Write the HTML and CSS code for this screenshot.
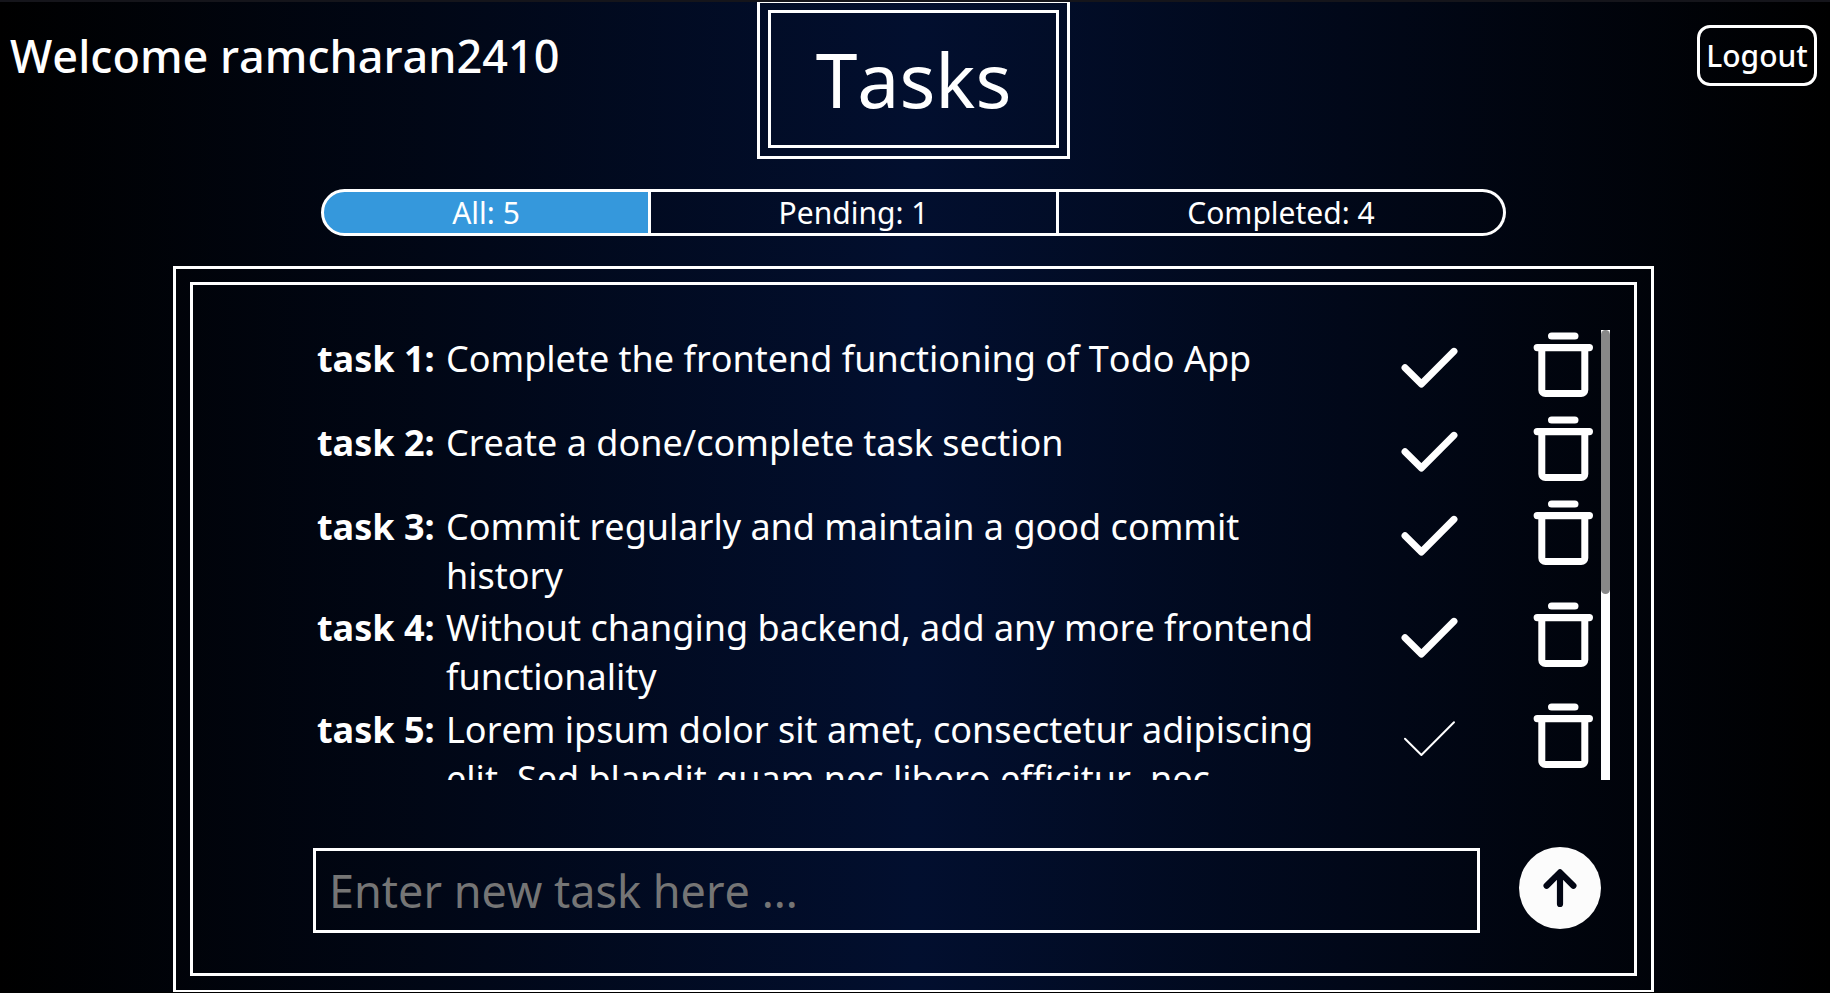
FILE: index.html
```html
<!DOCTYPE html>
<html lang="en">
<head>
<meta charset="utf-8">
<title>Tasks</title>
<link rel="stylesheet" href="styles.css">
</head>
<body>
<svg class="sprite" aria-hidden="true">
  <symbol id="check" viewBox="0 0 66 84"><path d="M10 37.7L26.4 54L59 21.3"/></symbol>
  <symbol id="trash" viewBox="0 0 66 84"><path d="M18.6 6h23.3M4.2 17.6h52.2" stroke-width="7.2"/><path d="M8.8 18v42a3.6 3.6 0 0 0 3.6 3.6h35.8a3.6 3.6 0 0 0 3.6-3.6V18" stroke-width="7"/></symbol>
</svg>
<div class="page">
  <header class="header">
    <div class="welcome">Welcome ramcharan2410</div>
    <h1 class="title"><span class="title-inner">Tasks</span></h1>
    <button class="logout">Logout</button>
  </header>
  <nav class="filters">
    <div class="filter filter-all">All: 5</div>
    <div class="filter filter-pending">Pending: 1</div>
    <div class="filter filter-completed">Completed: 4</div>
  </nav>
  <main class="panel">
    <div class="panel-inner">
      <div class="scroller">
        <ul class="list">
          <li class="task"><b class="label">task 1:</b><span class="text">Complete the frontend functioning of Todo App</span><svg class="check"><use href="#check"/></svg><svg class="trash"><use href="#trash"/></svg></li>
          <li class="task"><b class="label">task 2:</b><span class="text">Create a done/complete task section</span><svg class="check"><use href="#check"/></svg><svg class="trash"><use href="#trash"/></svg></li>
          <li class="task"><b class="label">task 3:</b><span class="text">Commit regularly and maintain a good commit history</span><svg class="check"><use href="#check"/></svg><svg class="trash"><use href="#trash"/></svg></li>
          <li class="task"><b class="label">task 4:</b><span class="text">Without changing backend, add any more frontend functionality</span><svg class="check"><use href="#check"/></svg><svg class="trash"><use href="#trash"/></svg></li>
          <li class="task"><b class="label">task 5:</b><span class="text">Lorem ipsum dolor sit amet, consectetur adipiscing elit. Sed blandit quam nec libero efficitur, nec</span><svg class="check check-pending"><use href="#check"/></svg><svg class="trash"><use href="#trash"/></svg></li>
        </ul>
        <div class="scrollbar"><div class="thumb"></div></div>
      </div>
      <form class="new-task">
        <input class="input" type="text" placeholder="Enter new task here ...">
        <svg class="send" viewBox="0 0 82 82"><circle cx="41" cy="41" r="41" fill="#fcfcfc" stroke="none"/><path d="M41 57V25.8M27.6 38.8L41 25.4l13.4 13.4"/></svg>
      </form>
    </div>
  </main>
</div>
</body>
</html>
```
FILE: styles.css
```css
* { box-sizing: border-box; font-kerning: none; }
body {
  margin: 0;
  height: 993px;
  overflow: hidden;
  border-bottom: 1px solid #000;
  background: linear-gradient(to right, #000, #020f2f, #000);
  color: #fff;
  font-family: "Noto Sans", sans-serif;
}
body::before {
  content: "";
  position: absolute;
  inset: 0 0 auto;
  height: 2px;
  background: #15151b;
}
.sprite { position: absolute; width: 0; height: 0; }
.page { display: flex; flex-direction: column; height: 992px; overflow: hidden; }
.header {
  display: grid;
  flex: none;
  grid-template-columns: 757px 313px 1fr;
  height: 189px;
  align-items: start;
}
.welcome { padding: 25px 0 0 10px; font-size: 45px; font-weight: 500; line-height: 61px; white-space: nowrap; }
.title {
  margin: 0;
  height: 159px;
  padding: 7px 8px 8px;
  border: 3px solid #fff;
  font-size: 75px;
  font-weight: 400;
}
.title-inner { display: flex; align-items: center; justify-content: center; height: 138px; padding-top: 1px; border: 3px solid #fff; line-height: 1; }
.logout {
  justify-self: end;
  margin: 25px 13px 0 0;
  width: 120px;
  height: 61px;
  padding: 0;
  border: 3px solid #fff;
  border-radius: 13px;
  background: none;
  color: inherit;
  font: 500 30px/1 "Noto Sans", sans-serif;
  font-kerning: none;
}
.filters { display: flex; flex: none; margin-left: 321px; width: 1185px; height: 47px; font-size: 30px; }
.filter { display: flex; align-items: center; justify-content: center; border: 3px solid #fff; line-height: 41px; }
.filter-all { width: 330px; border-radius: 23.5px 0 0 23.5px; background: #3598dc; }
.filter-pending { width: 408px; border-left: 0; }
.filter-completed { width: 447px; border-left: 0; border-radius: 0 23.5px 23.5px 0; }
.panel { flex: none; margin: 30px 0 0 173px; width: 1481px; height: 727px; padding: 13px 14px; border: 3px solid #fff; }
.panel-inner { height: 694px; padding: 45px 24px 0 120px; border: 3px solid #fff; }
.scroller { display: flex; height: 450px; overflow: hidden; }
.list { flex: 1; margin: 0; padding: 0; list-style: none; }
.task { display: flex; min-height: 84px; padding-bottom: 3.4px; font-size: 36px; line-height: 49px; }
.label { flex: none; width: 133px; padding: 4px 0 0 4px; }
.text { flex: none; width: 885px; margin: 4px 64px -4px 0; }
.check { flex: none; width: 66px; height: 84px; margin: 0.2px 72px -84px 0; fill: none; stroke: #fff; stroke-width: 6.9; stroke-linecap: round; stroke-linejoin: round; }
.check-pending { stroke-width: 2; }
.trash { flex: none; width: 66px; height: 84px; margin: 0.2px 0 -84px; fill: none; stroke: #fff; stroke-linecap: round; }
.scrollbar { flex: none; width: 9px; background: #fff; }
.thumb { height: 264px; border-radius: 4.5px; background: #888; }
.new-task { display: flex; margin-top: 67px; }
.input {
  flex: none;
  width: 1167px;
  height: 85px;
  margin-top: 1px;
  padding: 0 0 0 13px;
  border: 3px solid #fff;
  background: none;
  color: #fff;
  font: 45px "Noto Sans", sans-serif;
  font-kerning: none;
}
.input::placeholder { color: #757575; }
.send { flex: none; width: 82px; height: 82px; margin-left: 39px; fill: none; stroke: #020614; stroke-width: 6.2; stroke-linecap: round; stroke-linejoin: round; }
```
